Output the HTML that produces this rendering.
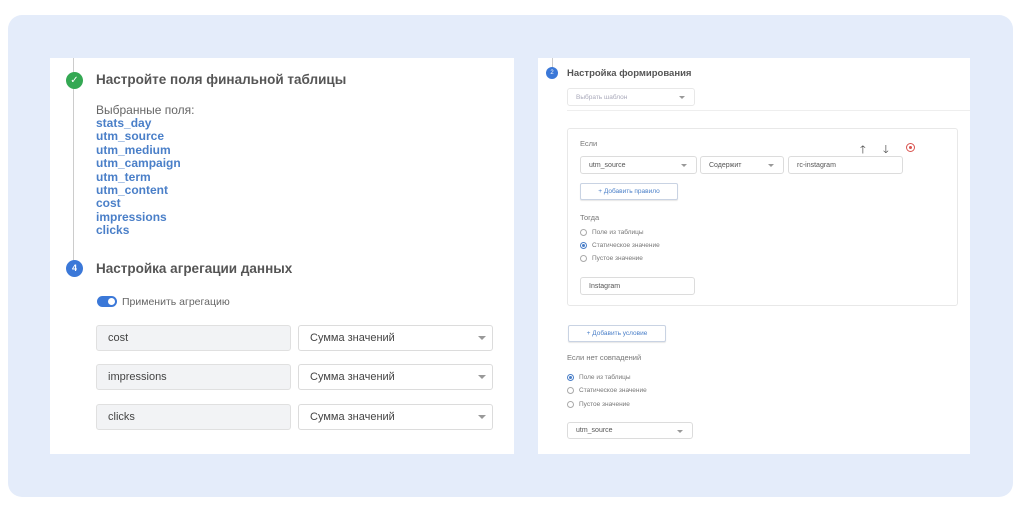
<!DOCTYPE html><html><head><meta charset="utf-8"><style>
*{box-sizing:border-box;margin:0;padding:0}
body{width:1024px;height:509px;background:#fff;font-family:"Liberation Sans",sans-serif;position:relative;overflow:hidden}
.a{position:absolute}
.bg{left:8px;top:15px;width:1005px;height:482px;background:#e4ecfa;border-radius:14px}
.p{background:#fff}
.t{color:#555;font-weight:bold;white-space:nowrap}
.f{color:#4a7fc8;font-weight:bold;font-size:12px;line-height:13.4px}
.in{border:1px solid #dcdcdc;border-radius:3px;background:#fff;color:#555;font-size:7px;padding-left:8px;display:flex;align-items:center}
.car::after{content:"";position:absolute;right:9px;top:50%;margin-top:-1px;border:3px solid transparent;border-top:3px solid #999}
.big{font-size:11px;color:#444;padding-left:11px}
.big.car::after{border-width:4px;border-top-width:4px;right:6px;margin-top:-2px}
.gray{background:#f2f3f5;border-color:#e0e0e0}
.r{font-size:6.5px;color:#777;display:flex;align-items:center}
.r i{width:7px;height:7px;border:1px solid #aaa;border-radius:50%;margin-right:5px;display:inline-block;position:relative}
.r i.on{border-color:#4a7fc8}.r i.on::after{content:"";position:absolute;left:1px;top:1px;width:3px;height:3px;border-radius:50%;background:#4a7fc8}
.btn{border:1px solid #c9d3e3;border-radius:2px;color:#4a7fc8;font-size:6.5px;display:flex;align-items:center;justify-content:center;background:#fff;box-shadow:0 1px 1px rgba(0,0,0,.1)}
.s{font-size:7.5px;color:#777}
</style></head><body>
<div class="a bg"></div>
<div class="a p" style="left:50px;top:58px;width:464px;height:396px"></div>
<div class="a p" style="left:538px;top:58px;width:432px;height:396px"></div>
<div class="a" style="left:73px;top:58px;width:1px;height:205px;background:#ccc"></div>
<div class="a" style="left:66px;top:72px;width:17px;height:17px;border-radius:50%;background:#34a853;color:#fff;font-size:10px;text-align:center;line-height:17px">✓</div>
<div class="a t" style="left:96px;top:72px;font-size:13.5px">Настройте поля финальной таблицы</div>
<div class="a" style="left:96px;top:103px;font-size:12px;color:#666">Выбранные поля:</div>
<div class="a f" style="left:96px;top:117px">stats_day<br>utm_source<br>utm_medium<br>utm_campaign<br>utm_term<br>utm_content<br>cost<br>impressions<br>clicks</div>
<div class="a" style="left:66px;top:260px;width:17px;height:17px;border-radius:50%;background:#3b78d8;color:#fff;font-size:9px;font-weight:bold;text-align:center;line-height:17px">4</div>
<div class="a t" style="left:96px;top:261px;font-size:13.5px">Настройка агрегации данных</div>
<div class="a" style="left:97px;top:296px;width:20px;height:11px;border-radius:6px;background:#3b78d8"><div style="position:absolute;right:2px;top:2px;width:7px;height:7px;border-radius:50%;background:#fff"></div></div>
<div class="a" style="left:122px;top:296px;font-size:10.5px;color:#666">Применить агрегацию</div>
<div class="a in big gray" style="left:96px;top:325px;width:195px;height:26px">cost</div>
<div class="a in big car" style="left:298px;top:325px;width:195px;height:26px">Сумма значений</div>
<div class="a in big gray" style="left:96px;top:364px;width:195px;height:26px">impressions</div>
<div class="a in big car" style="left:298px;top:364px;width:195px;height:26px">Сумма значений</div>
<div class="a in big gray" style="left:96px;top:404px;width:195px;height:26px">clicks</div>
<div class="a in big car" style="left:298px;top:404px;width:195px;height:26px">Сумма значений</div>

<div class="a" style="left:552px;top:58px;width:1px;height:10px;background:#ccc"></div>
<div class="a" style="left:546px;top:67px;width:12px;height:12px;border-radius:50%;background:#3b78d8;color:#fff;font-size:6px;text-align:center;line-height:12px">2</div>
<div class="a t" style="left:567px;top:68px;font-size:9.5px">Настройка формирования</div>
<div class="a in car" style="left:567px;top:88px;width:128px;height:18px;color:#aab;font-size:6.5px;border-color:#e8e8e8">Выбрать шаблон</div>
<div class="a" style="left:567px;top:110px;width:403px;height:1px;background:#eee"></div>
<div class="a" style="left:567px;top:128px;width:391px;height:178px;border:1px solid #e8e8e8;border-radius:3px"></div>
<div class="a s" style="left:580px;top:139px">Если</div>
<div class="a" style="left:860px;top:141px;font-size:11px;color:#444">🡑</div>
<div class="a" style="left:883px;top:141px;font-size:11px;color:#444">🡓</div>
<div class="a" style="left:906px;top:143px;width:9px;height:9px;border:1.3px solid #d9534f;border-radius:50%"><div style="position:absolute;left:2px;top:2px;width:3px;height:3px;background:#d9534f;border-radius:50%"></div></div>
<div class="a in car" style="left:580px;top:156px;width:117px;height:18px">utm_source</div>
<div class="a in car" style="left:700px;top:156px;width:84px;height:18px">Содержит</div>
<div class="a in" style="left:788px;top:156px;width:115px;height:18px">rc-instagram</div>
<div class="a btn" style="left:580px;top:183px;width:98px;height:17px">+ Добавить правило</div>
<div class="a s" style="left:580px;top:213px">Тогда</div>
<div class="a r" style="left:580px;top:229px"><i></i>Поле из таблицы</div>
<div class="a r" style="left:580px;top:242px"><i class="on"></i>Статическое значение</div>
<div class="a r" style="left:580px;top:255px"><i></i>Пустое значение</div>
<div class="a in" style="left:580px;top:277px;width:115px;height:18px">Instagram</div>
<div class="a btn" style="left:568px;top:325px;width:98px;height:17px">+ Добавить условие</div>
<div class="a s" style="left:567px;top:353px">Если нет совпадений</div>
<div class="a r" style="left:567px;top:374px"><i class="on"></i>Поле из таблицы</div>
<div class="a r" style="left:567px;top:387px"><i></i>Статическое значение</div>
<div class="a r" style="left:567px;top:401px"><i></i>Пустое значение</div>
<div class="a in car" style="left:567px;top:422px;width:126px;height:17px">utm_source</div>
</body></html>
